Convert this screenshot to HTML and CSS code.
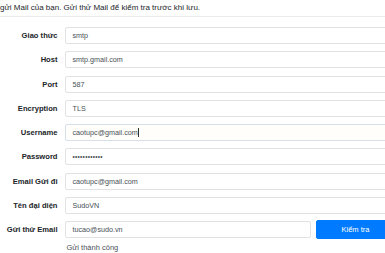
FILE: index.html
```html
<!DOCTYPE html>
<html lang="vi">
<head>
<meta charset="utf-8">
<link rel="stylesheet" href="styles.css">
</head>
<body>
<div class="page">
  <p class="intro">gửi Mail của bạn. Gửi thử Mail để kiểm tra trước khi lưu.</p>
  <div class="form">
    <div class="row"><label class="lbl">Giao thức</label><div class="field">smtp</div></div>
    <div class="row"><label class="lbl">Host</label><div class="field">smtp.gmail.com</div></div>
    <div class="row"><label class="lbl">Port</label><div class="field">587</div></div>
    <div class="row"><label class="lbl">Encryption</label><div class="field">TLS</div></div>
    <div class="row"><label class="lbl">Username</label><div class="field focus">caotupc@gmail.com<span class="caret"></span></div></div>
    <div class="row"><label class="lbl">Password</label><div class="field dots">••••••••••••</div></div>
    <div class="row"><label class="lbl">Email Gửi đi</label><div class="field">caotupc@gmail.com</div></div>
    <div class="row"><label class="lbl">Tên đại diện</label><div class="field">SudoVN</div></div>
    <div class="row"><label class="lbl">Gửi thử Email</label>
      <div class="test">
        <div class="field short">tucao@sudo.vn</div>
        <button class="btn">Kiểm tra</button>
      </div>
    </div>
    <div class="row msg-row"><span></span><span class="msg">Gửi thành công</span></div>
  </div>
</div>
</body>
</html>
```
FILE: styles.css
```css
html, body {
  margin: 0;
  padding: 0;
  background: #fff;
  overflow: hidden;
}
.page {
  width: 420px;
  font-family: "Liberation Sans", Arial, sans-serif;
  font-size: 7.5px;
  color: #212529;
}
.intro {
  margin: 0;
  height: 16px;
  line-height: 15px;
  font-size: 8px;
  border-bottom: 1px solid #ececec;
  white-space: nowrap;
}
.form {
  padding-top: 10px;
  display: flex;
  flex-direction: column;
  gap: 7.25px;
}
.row {
  display: grid;
  grid-template-columns: 57.5px 1fr;
  column-gap: 7px;
  align-items: center;
}
.lbl {
  text-align: right;
  font-weight: bold;
  font-size: 7.6px;
  white-space: nowrap;
}
.field {
  box-sizing: border-box;
  height: 17px;
  border: 1px solid #e2e2e2;
  border-radius: 2px;
  background: #fff;
  padding: 0 7px;
  line-height: 15px;
  font-size: 7.2px;
  color: #495057;
  white-space: nowrap;
  display: flex;
  align-items: center;
}
.field.focus {
  border-color: #d6e0ea;
  background: #fffefb;
}
.caret {
  display: inline-block;
  width: 0.6px;
  height: 9px;
  background: #333;
  margin-left: 0.5px;
}
.field.dots {
  letter-spacing: 0.25px;
  font-size: 6.5px;
}
.test {
  display: flex;
  gap: 5px;
  align-items: center;
}
.field.short {
  width: 246px;
  flex: none;
}
.btn {
  height: 18.5px;
  width: 80px;
  background: #007bff;
  color: #fff;
  border: 1px solid #007bff;
  border-radius: 2px;
  font-family: "Liberation Sans", Arial, sans-serif;
  font-size: 7.5px;
  padding: 0;
  margin-top: -1px;
}
.msg-row {
  margin-top: -3px;
}
.msg {
  padding-left: 2px;
  color: #495057;
}
```
